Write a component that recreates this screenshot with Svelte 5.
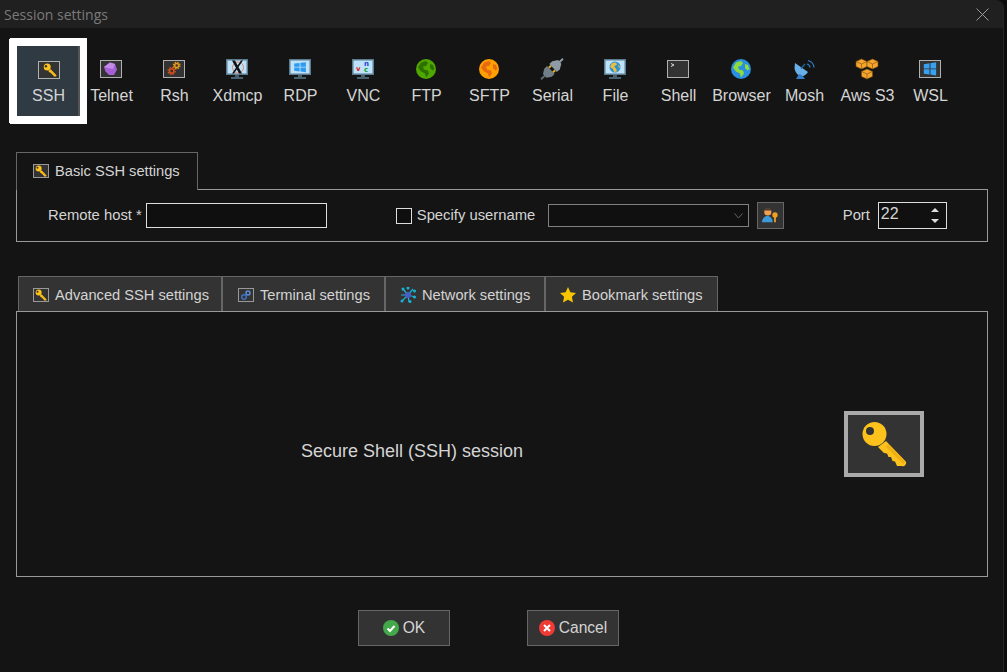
<script>
  const sessions = ["SSH", "Telnet", "Rsh", "Xdmcp", "RDP", "VNC", "FTP", "SFTP", "Serial", "File", "Shell", "Browser", "Mosh", "Aws S3", "WSL"];
  const globes = { FTP: ["#4fa800", "#2f6f00"], SFTP: ["#ffa000", "#e86a10"], Browser: ["#2a8fe0", "#8fdc3a"] };
  const keyShaft = "M42 30 62 50.700a3.400 3.400 0 0 1-4.300 4.300H53l-2-4.500-2.500-.500-1.500-4-2.500 0-1.500-3.500-3-.500-6-6Z";
</script>

{#snippet key(size)}
  <svg class="key" width={size} height={size} viewBox="16 9 48 48">
    <circle cx="30.500" cy="23" r="12" fill="#fdc31c" />
    <path d={keyShaft} fill="#fdc31c" />
    <path d="M42 36 59 53a3 3 0 0 0 2-2.300L44 33Z" fill="#f0b013" />
    <circle cx="26" cy="20" r="4" fill="#333" />
  </svg>
{/snippet}

{#snippet winLogo(x, y, sx, sy, fill)}
  <g transform="translate({x} {y}) scale({sx} {sy})" fill={fill}>
    <path d="M0 1.500 6 .6V6H0ZM7 .5 13 -.4V6H7ZM0 7H6V12.400L0 11.500ZM7 7H13V13.400L7 12.500Z" />
  </g>
{/snippet}

{#snippet monitor()}
  <rect x="0" y="0" width="22" height="16" fill="#5b7c8f" />
  <rect x="1.500" y="1.500" width="19" height="13" fill="#bfe2fb" />
  <rect x="9" y="16" width="4" height="2.500" fill="#47606e" />
  <rect x="5" y="18" width="12" height="2" fill="#47606e" />
{/snippet}

{#snippet globe(sea, land)}
  <circle cx="11" cy="10" r="10" fill={sea} />
  <path d="M6 3.500 11 2l2 2-2 3-3 .5 1 3 4 1 1 3-3 4-1-4-4-2-3-4ZM15 5l3 1 1.500 4-2 1.500L15 9Z" fill={land} />
{/snippet}

{#snippet glyph(name)}
  <svg class="glyph" width="22" height="20" viewBox="0 0 22 20">
    {#if name === "SSH" || name === "Telnet" || name === "Rsh" || name === "Shell" || name === "WSL"}
      <rect x=".5" y="1.500" width="21" height="17" fill="#333" stroke="#b0b0b0" />
    {/if}
    {#if name === "Telnet"}
      <path d="M10 3.500 15 5l2 5.500-3 5.500H9l-3.500-3.500L4 8Z" fill="#a75fd6" />
      <path d="M10 3.500 15 5l-2 5-5-1-4-1Z" fill="#c48ae8" />
    {:else if name === "Rsh"}
      <circle cx="13.700" cy="6.500" r="2" fill="none" stroke="#e89a18" stroke-width="1.500" />
      <circle cx="13.700" cy="6.500" r="3.300" fill="none" stroke="#e89a18" stroke-width="1.200" stroke-dasharray="1.500 1.100" />
      <circle cx="8.700" cy="12" r="2.200" fill="none" stroke="#d8501a" stroke-width="1.600" />
      <circle cx="8.700" cy="12" r="3.600" fill="none" stroke="#d8501a" stroke-width="1.200" stroke-dasharray="1.600 1.200" />
    {:else if name === "Xdmcp"}
      {@render monitor()}
      <circle cx="12" cy="8.500" r="5.500" fill="none" stroke="#e08a70" />
      <path d="M6 1.500h3l7 13h-3ZM15 1.500h2L8 14.500H6Z" fill="#111" />
    {:else if name === "RDP"}
      {@render monitor()}
      {@render winLogo(5.200, 3.500, 0.9, 0.72, "#2f9bf0")}
    {:else if name === "VNC"}
      {@render monitor()}
      <text x="4" y="12" class="tiny" fill="#e02020">v</text>
      <text x="12" y="7" class="tiny" fill="#2040d0">n</text>
      <text x="12" y="13" class="tiny" fill="#10a030">c</text>
    {:else if name === "FTP" || name === "SFTP" || name === "Browser"}
      {@render globe(globes[name][0], globes[name][1])}
    {:else if name === "Serial"}
      <g transform="rotate(-43 11 10)">
        <path d="M-4 9h6v2h-6Z" fill="#5f6b74" />
        <path d="M1 7.500 5.500 4.500h4v11h-4L1 12.500Z" fill="#727e87" />
        <path d="M9.500 6h3v2h-3ZM9.500 12h3v2h-3Z" fill="#e8b020" />
        <path d="M12.500 4.500H16.500l5 3v5l-5 3h-4Z" fill="#8f9ba4" />
        <path d="M21 9h5v2h-5Z" fill="#8f9ba4" />
      </g>
    {:else if name === "File"}
      {@render monitor()}
      <circle cx="11" cy="8" r="5.500" fill="#2f8fd0" />
      <path d="M8 4 12 3.500l1 2-3 2 2 2 1 3-3 .5-1-3-3-2ZM14 5.500l2 2-1 2Z" fill="#e8c040" />
    {:else if name === "Shell"}
      <path d="M4 4.500 7 6 4 7.500" fill="none" stroke="#ddd" />
    {:else if name === "Mosh"}
      <path d="M2 4 15 13Q12 18 7 17 0 14 2 4Z" fill="#6ab0e8" />
      <path d="M6 15 3 20H12L9 16Z" fill="#2f80c8" />
      <path d="M8 9.500l4-4.500" stroke="#1e5f96" stroke-width="1.500" />
      <path d="M14 5a4 4 0 0 1 3 3.500M15 1.500a8 8 0 0 1 6 7" fill="none" stroke="#2f80c8" stroke-width="1.200" />
    {:else if name === "Aws S3"}
      {#each [[0, 0], [11, 0], [5.500, 10]] as [x, y]}
        <g transform="translate({x} {y})">
          <path d="M5.500 0 11 2.500v5L5.500 10 0 7.500v-5Z" fill="#f5a52e" stroke="#7a4e10" stroke-width=".6" />
          <path d="M0 2.500 5.500 5 11 2.500M5.500 5v5" fill="none" stroke="#7a4e10" stroke-width=".6" />
        </g>
      {/each}
    {:else if name === "WSL"}
      {@render winLogo(4.800, 3.700, 0.95, 0.95, "#3aa0f0")}
    {/if}
  </svg>
  {#if name === "SSH"}
    <div class="ssh-key">{@render key(14)}</div>
  {/if}
{/snippet}

{#snippet keyTab()}
  <span class="tab-icon">{@render key(12)}</span>
{/snippet}

<div class="window">
  <header class="titlebar">
    <span class="title">Session settings</span>
    <svg width="13" height="13" viewBox="0 0 13 13" class="close">
      <path d="M.5.500l12 12M12.500.500l-12 12" stroke="#999" />
    </svg>
  </header>

  <nav class="sessions">
    {#each sessions as name, i}
      <div class="session" class:active={i === 0}>
        <div class="icon">{@render glyph(name)}</div>
        <span class="name">{name}</span>
      </div>
    {/each}
  </nav>

  <div class="basic-tab">{@render keyTab()}Basic SSH settings</div>
  <section class="basic">
    <label class="host"><span class="lbl">Remote host *</span><input type="text" /></label>
    <label class="user"><span class="check"></span><span class="lbl">Specify username</span></label>
    <div class="combo">
      <svg width="9" height="6" viewBox="0 0 9 6"><path d="M.500.500 4.500 5 8.500.500" fill="none" stroke="#666" /></svg>
    </div>
    <button class="user-btn" aria-label="Credentials">
      <svg width="17" height="17" viewBox="0 0 19 19">
        <circle cx="6.500" cy="5.500" r="4" fill="#f0a050" />
        <path d="M2.500 4a4 3 0 0 1 8 0Z" fill="#4a3a30" />
        <path d="M0 17c0-4 3-7 6-7s6 3 6 7Z" fill="#3d9ad8" />
        <circle cx="14.500" cy="9" r="3" fill="#f0a020" />
        <path d="M13.500 10h2v7h-2Z" fill="#f0a020" />
      </svg>
    </button>
    <span class="port-label lbl">Port</span>
    <div class="spin">
      22
      <svg width="8" height="15" viewBox="0 0 8 15">
        <path d="M4 0 8 4H0ZM0 11h8l-4 4Z" fill="#ddd" />
      </svg>
    </div>
  </section>

  <div class="tabs">
    <div class="tab adv">{@render keyTab()}Advanced SSH settings</div>
    <div class="tab term">
      <span class="tab-icon">
        <svg width="12" height="12" viewBox="0 0 12 12">
          <circle cx="8" cy="4" r="2" fill="none" stroke="#5a8ad8" stroke-width="1.500" />
          <circle cx="4" cy="8" r="2.300" fill="none" stroke="#3f6fc0" stroke-width="1.500" />
        </svg>
      </span>Terminal settings
    </div>
    <div class="tab net">
      <svg class="tab-plain" width="16" height="16" viewBox="0 0 16 16">
        <path d="M8 8 3 2M8 8l5-6M8 8l7 2M8 8l-6 6M8 8l1 7M8 8H1" stroke="#18b4d8" stroke-width="1.200" />
        {#each [[3, 2], [8, 1], [14.500, 4], [14.500, 10], [2, 14], [10, 14.500]] as [cx, cy]}
          <circle {cx} {cy} r="1.500" fill="#18b4d8" />
        {/each}
        <circle cx="8" cy="8" r="3" fill="#4a5cc8" />
      </svg>Network settings
    </div>
    <div class="tab mark">
      <svg class="tab-plain" width="16" height="16" viewBox="0 0 16 16">
        <path d="M8 0l2.400 5.200 5.600.7-4.100 3.900 1.100 5.700L8 12.700 3 15.500l1.100-5.700L0 5.900l5.600-.7Z" fill="#f7c600" />
      </svg>Bookmark settings
    </div>
  </div>

  <section class="info">
    <span class="info-text">Secure Shell (SSH) session</span>
    <div class="info-icon">{@render key(48)}</div>
  </section>

  <footer class="actions">
    <button class="action">
      <svg width="16" height="16" viewBox="0 0 16 16">
        <circle cx="8" cy="8" r="8" fill="#43a84a" />
        <path d="M4.500 8.500 7 11l4.500-5" fill="none" stroke="#fff" stroke-width="2" />
      </svg>OK
    </button>
    <button class="action">
      <svg width="16" height="16" viewBox="0 0 16 16">
        <circle cx="8" cy="8" r="8" fill="#f03a35" />
        <path d="M5 5l6 6M11 5l-6 6" stroke="#fff" stroke-width="2" />
      </svg>Cancel
    </button>
  </footer>
</div>

<style>
  :global(body) {
    background: #0c0c0c;
  }
  .window {
    box-sizing: border-box;
    width: 1004px;
    height: 672px;
    background: #141414;
    border-right: 1px solid #262626;
    border-top-right-radius: 8px;
    font-family: "Liberation Sans", Arial, sans-serif;
    font-size: 14.67px;
    color: #d4d4d4;
  }
  .titlebar {
    height: 28px;
    background: #202020;
    border-top-right-radius: 8px;
    display: flex;
    align-items: center;
    justify-content: space-between;
    padding: 0 14px 0 4px;
  }
  .title {
    color: #7a7a7a;
    font-family: "Open Sans", sans-serif;
    font-size: 14px;
  }
  .sessions {
    display: flex;
    padding: 18px 0 0 17px;
    height: 70px;
    margin-bottom: 36px;
  }
  .session {
    width: 63px;
    height: 70px;
    box-sizing: border-box;
    display: flex;
    flex-direction: column;
    align-items: center;
    font-size: 16px;
    padding-top: 13px;
    position: relative;
  }
  .name {
    line-height: 18px;
    margin-top: 8px;
  }
  .session.active {
    background: #2f3a42;
    box-shadow: inset -2px 0 0 #555, 0 -1px 0 7px #fff, 0 1px 0 7px #fff, -1px 0 0 7px #fff;
    padding-top: 14px;
  }
  .active .name {
    margin-top: 7px;
  }
  .icon {
    position: relative;
    height: 20px;
    margin-right: 1px;
  }
  .active .icon {
    margin-right: 0;
  }
  .glyph {
    display: block;
    overflow: visible;
  }
  .key {
    display: block;
  }
  .tiny {
    font-family: "DejaVu Sans", sans-serif;
    font-size: 7px;
    font-weight: 700;
  }
  .ssh-key {
    position: absolute;
    left: 5px;
    top: 3px;
  }
  .basic-tab {
    box-sizing: border-box;
    margin-left: 16px;
    width: 182px;
    height: 38px;
    border: 1px solid #666;
    border-bottom: none;
    display: flex;
    align-items: center;
    padding: 0 0 2px 16px;
    position: relative;
    z-index: 1;
    background: #141414;
  }
  .tab-icon {
    box-sizing: border-box;
    width: 16px;
    height: 14px;
    border: 1px solid #999;
    background: #333;
    display: inline-flex;
    align-items: center;
    justify-content: center;
    margin-right: 6px;
  }
  .basic {
    box-sizing: border-box;
    margin: -1px 0 0 16px;
    width: 972px;
    height: 53px;
    border: 1px solid #999;
    display: flex;
    align-items: center;
    padding-left: 31px;
    font-size: 14.8px;
  }
  .lbl {
    margin-bottom: 2px;
    white-space: nowrap;
  }
  .host {
    display: flex;
    align-items: center;
    gap: 4px;
    margin-right: 69px;
  }
  input {
    box-sizing: border-box;
    width: 181px;
    height: 25px;
    background: #0f0f0f;
    border: 1px solid #ddd;
    margin: 0;
    padding: 0;
  }
  .user {
    display: flex;
    align-items: center;
    gap: 5px;
    margin-right: 13px;
    width: 139px;
  }
  .check {
    flex: none;
    box-sizing: border-box;
    width: 16px;
    height: 16px;
    border: 1px solid #ddd;
    background: #0f0f0f;
  }
  .combo {
    box-sizing: border-box;
    width: 201px;
    height: 23px;
    border: 1px solid #808080;
    background: #101010;
    display: flex;
    align-items: center;
    justify-content: flex-end;
    padding-right: 5px;
    margin-right: 8px;
  }
  .user-btn {
    box-sizing: border-box;
    width: 27px;
    height: 27px;
    border: 1px solid #666;
    background: #333;
    padding: 0;
    display: flex;
    align-items: center;
    justify-content: center;
    margin-right: 59px;
  }
  .port-label {
    width: 35px;
  }
  .spin {
    box-sizing: border-box;
    width: 69px;
    height: 27px;
    border: 1px solid #ddd;
    background: #101010;
    display: flex;
    align-items: center;
    justify-content: space-between;
    padding: 0 7px 4px 2px;
    font-size: 16px;
  }
  .spin svg {
    margin-top: 4px;
  }
  .tabs {
    display: flex;
    margin: 34px 0 0 18px;
    height: 35px;
  }
  .tab {
    box-sizing: border-box;
    height: 35px;
    background: #333;
    border: 1px solid #666;
    border-bottom: none;
    display: flex;
    align-items: center;
    padding: 1px 0 0 14px;
  }
  .adv { width: 204px; }
  .term { width: 163px; padding-left: 15px; }
  .net { width: 160px; }
  .mark { width: 173px; }
  .tab-plain {
    margin-right: 6px;
  }
  .info {
    box-sizing: border-box;
    margin-left: 16px;
    width: 972px;
    height: 266px;
    border: 1px solid #999;
    display: flex;
    align-items: center;
    padding: 0 63px 0 284px;
    justify-content: space-between;
    font-size: 18px;
  }
  .info-text {
    margin-top: 15px;
  }
  .info-icon {
    box-sizing: border-box;
    width: 80px;
    height: 66px;
    border: 4px solid #aaa;
    background: #333;
    display: flex;
    align-items: center;
    justify-content: center;
  }
  .actions {
    display: flex;
    gap: 77px;
    padding: 33px 0 0 358px;
  }
  .action {
    box-sizing: border-box;
    width: 92px;
    height: 36px;
    background: #333;
    border: 1px solid #666;
    color: #d4d4d4;
    font: 15.6px "Liberation Sans", Arial, sans-serif;
    display: flex;
    align-items: center;
    justify-content: center;
    gap: 4px;
    padding: 0;
  }
</style>
